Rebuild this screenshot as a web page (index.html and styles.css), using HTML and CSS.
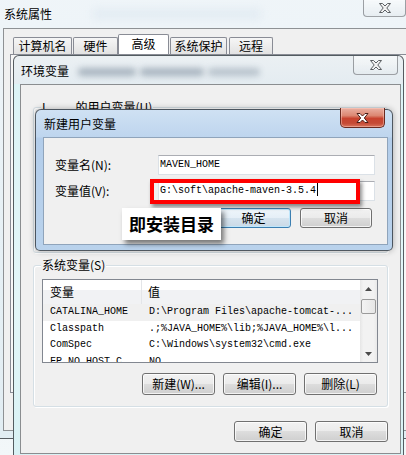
FILE: index.html
```html
<!DOCTYPE html>
<html lang="zh-CN">
<head>
<meta charset="utf-8">
<title>环境变量</title>
<link rel="stylesheet" href="styles.css">
</head>
<body>
<div class="desktop">
  <section class="win win-sys">
    <header class="titlebar sys-titlebar"><span class="title">系统属性</span><span class="haze"></span></header>
    <div class="close close-idle sys-close"><svg width="12" height="10" viewBox="0 0 12 10"><polygon points="0.5,0.5 3.5,0.5 6,3 8.5,0.5 11.5,0.5 7.8,5 11.5,9.5 8.5,9.5 6,7 3.5,9.5 0.5,9.5 4.2,5"/></svg></div>
    <div class="sys-client">
      <nav class="tabs">
        <div class="tab t1">计算机名</div>
        <div class="tab t2">硬件</div>
        <div class="tab t3 active">高级</div>
        <div class="tab t4">系统保护</div>
        <div class="tab t5">远程</div>
      </nav>
      <div class="tabpanel"></div>
    </div>
  </section>

  <section class="win win-env">
    <header class="titlebar env-titlebar">
      <span class="title">环境变量</span>
      <span class="ghost" aria-hidden="true"><i class="g1"></i><i class="g2"></i><i class="g3"></i></span>
    </header>
    <div class="close close-idle env-close"><svg width="12" height="10" viewBox="0 0 12 10"><polygon points="0.5,0.5 3.5,0.5 6,3 8.5,0.5 11.5,0.5 7.8,5 11.5,9.5 8.5,9.5 6,7 3.5,9.5 0.5,9.5 4.2,5"/></svg></div>
    <div class="env-client">
      <div class="group user-group"><span class="group-label">I<span class="mask"></span>的用户变量(U)</span></div>
      <div class="group sys-group">
        <span class="group-label">系统变量(S)</span>
        <div class="list">
          <div class="list-main">
            <div class="lv-head"><div class="c1">变量</div><div class="c2">值</div></div>
            <div class="lv-row hot"><div class="c1">CATALINA_HOME</div><div class="c2">D:\Program Files\apache-tomcat-...</div></div>
            <div class="lv-row"><div class="c1">Classpath</div><div class="c2">.;%JAVA_HOME%\lib;%JAVA_HOME%\l...</div></div>
            <div class="lv-row"><div class="c1">ComSpec</div><div class="c2">C:\Windows\system32\cmd.exe</div></div>
            <div class="lv-row"><div class="c1">FP_NO_HOST_C...</div><div class="c2">NO</div></div>
          </div>
          <div class="scroll">
            <div class="sb-arrow"><svg width="7" height="4" viewBox="0 0 7 4"><path d="M0 4H7L3.5 0Z"/></svg></div>
            <div class="sb-thumb"></div>
            <div class="sb-track"></div>
            <div class="sb-arrow"><svg width="7" height="4" viewBox="0 0 7 4"><path d="M0 0H7L3.5 4Z"/></svg></div>
          </div>
        </div>
        <div class="btn-row list-btns">
          <button class="btn">新建(W)...</button>
          <button class="btn">编辑(I)...</button>
          <button class="btn">删除(L)</button>
        </div>
      </div>
      <div class="btn-row env-btns">
        <button class="btn">确定</button>
        <button class="btn">取消</button>
      </div>
    </div>
  </section>

  <section class="win win-new">
    <header class="titlebar new-titlebar"><span class="title">新建用户变量</span></header>
    <div class="close close-red"><svg width="13" height="10" viewBox="0 0 12 10"><polygon points="0.5,0.5 3.5,0.5 6,3 8.5,0.5 11.5,0.5 7.8,5 11.5,9.5 8.5,9.5 6,7 3.5,9.5 0.5,9.5 4.2,5"/></svg></div>
    <div class="new-client">
      <div class="field"><label>变量名(N):</label><div class="input">MAVEN_HOME</div></div>
      <div class="field"><label>变量值(V):</label><div class="input">G:\soft\apache-maven-3.5.4<span class="caret"></span></div></div>
      <div class="btn-row new-btns">
        <button class="btn default">确定</button>
        <button class="btn cancel">取消</button>
      </div>
    </div>
  </section>

  <div class="note-rect"></div>
  <div class="note-label">即安装目录</div>
</div>
</body>
</html>
```

FILE: styles.css
```css
* { box-sizing: border-box; margin: 0; padding: 0; }
html, body { width: 406px; height: 455px; overflow: hidden; }
body {
  background: linear-gradient(180deg, #f5f9fb 0, #eaf1f5 50%, #f2f7f9 100%);
  font-family: "Noto Sans CJK SC", "Noto Sans", sans-serif;
  font-size: 12px;
  line-height: 14px;
  color: #000;
}
.desktop { position: relative; width: 406px; height: 455px; overflow: hidden; }

.win { position: absolute; border: 1px solid rgba(45, 50, 55, 0.78); border-radius: 6px 6px 0 0; }
.titlebar { display: flex; align-items: center; white-space: nowrap; }

/* close buttons */
.close {
  position: absolute;
  display: flex; align-items: center; justify-content: center;
  border: 1px solid rgba(70, 75, 80, 0.5);
  border-top: none;
  border-radius: 0 0 4px 4px;
  background: linear-gradient(180deg, rgba(255,255,255,0.55), rgba(228,234,238,0.7));
}
.close-idle polygon { fill: #f2f2f2; stroke: #5b5f63; stroke-width: 1; }
.sys-close { left: 368px; top: 0; width: 43px; height: 18px; }
.env-close { left: 339px; top: 0; width: 45px; height: 19px; }
.close-red {
  left: 304px; top: -2px; width: 45px; height: 20px;
  border: 1px solid #6a2a20; border-top: none; border-radius: 0 0 5px 5px;
  background: linear-gradient(180deg, #eab0a2 0, #dc8772 40%, #c8432f 55%, #c54a35 80%, #d8735c 100%);
  box-shadow: inset 0 0 0 1px rgba(255, 210, 200, 0.45);
}
.close-red polygon { fill: #ffffff; stroke: #4a1f18; stroke-width: 1; }

/* 系统属性 */
.win-sys {
  left: -6px; top: -2px; width: 430px; height: 441px;
  background: linear-gradient(180deg, rgba(238,244,248,0.95), rgba(224,236,242,0.95));
}
.sys-titlebar { height: 29px; padding-left: 9px; padding-top: 1px; }
.haze {
  display: inline-block; width: 170px; height: 10px; margin-left: 40px;
  background: rgba(190, 212, 228, 0.25); border-radius: 5px; filter: blur(4px);
}
.sys-client {
  margin-left: 8px; width: 420px; height: 403px;
  border: 1px solid #8e9194; border-right: none;
  background: #f0f0f0;
  padding: 5px 0 0 9px;
}
.tabs { display: flex; align-items: flex-end; height: 20px; }
.tab {
  height: 17px; line-height: 15px; text-align: center;
  border: 1px solid #898c95; border-bottom: none; border-radius: 2px 2px 0 0;
  background: linear-gradient(180deg, #f6f6f6, #e2e2e2);
}
.tab.active { height: 20px; line-height: 17px; background: #fff; }
.t1 { width: 59px; }
.t2 { width: 45px; margin-left: 1px; }
.t3 { width: 51px; }
.t4 { width: 57px; margin-left: 1px; }
.t5 { width: 44px; margin-left: 2px; }
.tabpanel {
  margin-left: -3px; width: 420px; height: 339px;
  border: 1px solid #898c95; background: #f7f7f7;
}

/* 环境变量 */
.win-env {
  left: 13px; top: 55px; width: 391px; height: 410px;
  padding: 0 2px 0 6px;
  background: linear-gradient(180deg, #ebf0f3 0, #e4ecf1 28px, #dcf3f6 28px, #e3f6f8 60%, #d8f1f4 100%);
}
.env-titlebar { height: 28px; padding-left: 1px; padding-top: 1px; }
.ghost { display: inline-flex; gap: 4px; margin-left: 9px; margin-top: 2px; }
.ghost i {
  display: block; height: 8px; border-radius: 4px;
  background: rgba(80, 100, 122, 0.42); filter: blur(3px);
}
.ghost .g1 { width: 58px; }
.ghost .g2 { width: 64px; }
.ghost .g3 { width: 52px; opacity: 0.75; }
.env-client {
  width: 381px; height: 370px;
  border: 1px solid #8a8d90; background: #f0f0f0;
  padding: 22px 0 0 12px;
}

.group {
  position: relative;
  border: 1px solid #d5dfe5; border-radius: 3px;
  box-shadow: inset 1px 1px 0 #fff, 1px 1px 0 #fff;
}
.group-label {
  position: absolute; left: 7px; top: -8px;
  padding: 0 1px; background: #f0f0f0; line-height: 14px; white-space: nowrap;
}
.mask { display: inline-block; width: 30px; }
.user-group { width: 355px; height: 146px; }
.sys-group { width: 355px; height: 142px; margin-top: 12px; padding: 13px 9px 0 8px; }

/* list view */
.list {
  display: flex; width: 336px; height: 84px;
  border: 1px solid #828790; background: #fff; overflow: hidden;
}
.list-main { flex: 1; overflow: hidden; }
.lv-head {
  display: grid; grid-template-columns: 99px 1fr; height: 24px; line-height: 24px;
  background: linear-gradient(180deg, #ffffff 0, #ffffff 42%, #f1f2f4 42%, #f1f2f4 100%);
}
.lv-head .c1 { border-right: 1px solid #e3e5e8; padding-left: 7px; }
.lv-head .c2 { padding-left: 6px; }
.lv-row {
  display: grid; grid-template-columns: 99px 1fr; height: 16.5px; line-height: 16.5px;
  font-family: "Liberation Mono", "DejaVu Sans Mono", monospace; font-size: 10px;
  white-space: nowrap;
}
.lv-row.hot { background: #f0f0f0; }
.lv-row .c1 { padding-left: 7px; overflow: hidden; }
.lv-row .c2 { padding-left: 7px; overflow: hidden; }
.scroll {
  width: 17px; display: flex; flex-direction: column;
  background: linear-gradient(90deg, #e6e6e6 0, #f2f2f2 20%, #f2f2f2 80%, #e9e9e9 100%);
}
.sb-arrow { height: 17px; display: flex; align-items: center; justify-content: center; }
.sb-arrow path { fill: #4a4a4a; }
.sb-thumb {
  height: 15px; margin: 2px 1px 0 1px;
  border: 1px solid #9a9a9a; border-radius: 2px;
  background: linear-gradient(90deg, #f3f3f3, #e6e6e6);
}
.sb-track { flex: 1; }

/* buttons */
.btn-row { display: flex; justify-content: flex-end; }
.btn {
  font: inherit; font-size: 12px; color: #000;
  width: 73px; height: 22px; padding: 0; line-height: 18px;
  border: 1px solid #707070; border-radius: 3px;
  background: linear-gradient(180deg, #f2f2f2 0, #ebebeb 49%, #dddddd 50%, #cfcfcf 100%);
  box-shadow: inset 0 0 0 1px rgba(255, 255, 255, 0.75);
}
.list-btns { gap: 8px; margin-top: 10px; padding-right: 1px; }
.env-btns { gap: 8px; margin-top: 14px; padding-right: 12px; }
.env-btns .btn { height: 21px; }

/* 新建用户变量 */
.win-new {
  left: 35px; top: 109px; width: 358px; height: 142px;
  border-radius: 6px 6px 5px 5px;
  padding: 0 4px 5px 7px;
  background: linear-gradient(180deg, #cfe1f3 0, #bed5ee 27px, #b3cdea 28px, #b9d2ec 100%);
  box-shadow: 0 0 6px rgba(0, 0, 0, 0.3);
}
.new-titlebar { height: 27px; padding-left: 1px; padding-top: 1px; }
.new-client {
  width: 345px; height: 108px;
  border: 1px solid #8fa4bb; background: #f0f0f0;
  padding: 17px 12px 0 11px;
}
.field { display: flex; align-items: center; height: 20px; margin-bottom: 6px; }
.field label { width: 103px; }
.input {
  width: 217px; height: 20px; line-height: 18px; padding-left: 1px;
  border: 1px solid #dbe1e7; border-top-color: #abadb3; background: #fff;
  font-family: "Liberation Mono", "DejaVu Sans Mono", monospace; font-size: 10px;
  white-space: nowrap;
}
.caret { display: inline-block; width: 1px; height: 13px; background: #000; vertical-align: -3px; margin-left: 1px; }
.new-btns { gap: 9px; margin-top: 7px; padding-right: 3px; }
.new-btns .btn { height: 20px; }
.btn.default {
  width: 75px; border-color: #3c7fb1;
  box-shadow: inset 0 0 0 1px #bfe6fb;
  background: linear-gradient(180deg, #eef5fa 0, #e5eff7 49%, #d6e4ef 50%, #cad9e6 100%);
}
.btn.cancel { width: 72px; }

/* annotations */
.note-rect {
  position: absolute; left: 150px; top: 179px; width: 210px; height: 25px;
  border: 4px solid #ff0000;
  box-shadow: 2px 3px 4px rgba(0, 0, 0, 0.45);
}
.note-label {
  position: absolute; left: 122px; top: 208px; width: 99px; height: 32px;
  background: #fff; text-align: center; line-height: 32px;
  font-size: 17px; font-weight: 700; color: #000;
  box-shadow: 3px 4px 5px rgba(0, 0, 0, 0.5);
}
```
